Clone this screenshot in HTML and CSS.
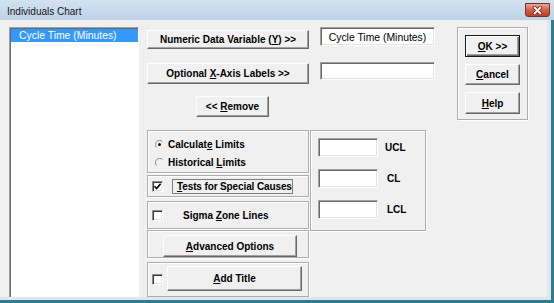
FILE: index.html
```html
<!DOCTYPE html>
<html>
<head>
<meta charset="utf-8">
<title>Individuals Chart</title>
<link rel="stylesheet" href="styles.css">
</head>
<body>
<div class="window">
  <div class="titlebar">
    <span class="title">Individuals Chart</span>
    <div class="close">
      <svg width="13" height="9" viewBox="0 0 13 9"><path d="M3.5 1.5 L9.5 7.5 M9.5 1.5 L3.5 7.5" stroke="#6a2418" stroke-width="3.4" stroke-linecap="round"/><path d="M3.5 1.5 L9.5 7.5 M9.5 1.5 L3.5 7.5" stroke="#fff" stroke-width="1.8" stroke-linecap="round"/></svg>
    </div>
  </div>
  <div class="body">
    <div class="client">
      <div class="listbox">
        <div class="item selected">Cycle Time (Minutes)</div>
      </div>

      <div class="center">
        <div class="row row1">
          <button class="btn btn-wide btn-num"><span>Numeric Data Variable (<u>Y</u>) &gt;&gt;</span></button>
          <div class="field field1">Cycle Time (Minutes)</div>
        </div>
        <div class="row row2">
          <button class="btn btn-wide btn-opt"><span>Optional <u>X</u>-Axis Labels &gt;&gt;</span></button>
          <div class="field field2"></div>
        </div>
        <div class="row row3">
          <button class="btn btn-remove"><span>&lt;&lt; <u>R</u>emove</span></button>
        </div>
        <div class="row row4">
          <div class="stack">
            <div class="frame f-radio">
              <div class="opt"><span class="radio"><svg width="9" height="9" viewBox="0 0 9 9"><path d="M7.5 1.6 A4 4 0 0 0 1.6 7.4" fill="none" stroke="#8a8a8a" stroke-width="1"/><circle cx="4.5" cy="4.5" r="1.5" fill="#111"/></svg></span><span>Calculat<u>e</u> Limits</span></div>
              <div class="opt"><span class="radio"><svg width="9" height="9" viewBox="0 0 9 9"><path d="M7.5 1.6 A4 4 0 0 0 1.6 7.4" fill="none" stroke="#8a8a8a" stroke-width="1"/></svg></span><span>Historical <u>L</u>imits</span></div>
            </div>
            <div class="frame f-tests">
              <span class="check"><svg width="9" height="9" viewBox="0 0 9 9"><path d="M1.5 4.2 L3.6 6.5 L7.6 1.8" fill="none" stroke="#000" stroke-width="1.6"/></svg></span>
              <span class="focus"><span><u>T</u>ests for Special Causes</span></span>
            </div>
            <div class="frame f-sigma">
              <span class="check"></span>
              <span class="sigma-label">Sigma <u>Z</u>one Lines</span>
            </div>
            <div class="frame f-adv">
              <button class="btn btn-adv"><span><u>A</u>dvanced Options</span></button>
            </div>
            <div class="frame f-title">
              <span class="check"></span>
              <button class="btn btn-title"><span><u>A</u>dd Title</span></button>
            </div>
          </div>
          <div class="frame f-limits">
            <div class="lim"><div class="field small"></div><span class="lab lab-ucl">UCL</span></div>
            <div class="lim"><div class="field small"></div><span class="lab lab-cl">CL</span></div>
            <div class="lim"><div class="field small"></div><span class="lab lab-lcl">LCL</span></div>
          </div>
        </div>
      </div>

      <div class="frame okgroup">
        <button class="btn btn-side btn-default"><span><u>O</u>K &gt;&gt;</span></button>
        <button class="btn btn-side btn-cancel"><span><u>C</u>ancel</span></button>
        <button class="btn btn-side btn-help"><span><u>H</u>elp</span></button>
      </div>
    </div>
  </div>
</div>
</body>
</html>
```

FILE: styles.css
```css
* { box-sizing: border-box; margin: 0; padding: 0; }
html, body { width: 554px; height: 303px; overflow: hidden; }
body {
  font-family: "Liberation Sans", Arial, sans-serif;
  color: #000;
  background: #f0f0f0;
}
u { text-decoration: underline; text-underline-offset: 1px; }

.window {
  width: 554px;
  height: 303px;
  display: flex;
  flex-direction: column;
}

.titlebar {
  height: 20px;
  flex: none;
  background: linear-gradient(#d3e2f2, #bed2e8);
  display: flex;
  align-items: flex-start;
  justify-content: space-between;
  padding: 0 4px 0 7px;
}
.title {
  font-size: 10px;
  line-height: 20px;
  margin-top: 2px;
  color: #151515;
}
.close {
  width: 25px;
  height: 14px;
  margin-top: 3px;
  border: 1px solid #7a3024;
  border-radius: 0 0 3px 3px;
  background: linear-gradient(#e9a896, #cf6049 50%, #bc3f29);
  display: flex;
  align-items: center;
  justify-content: center;
}

.body {
  flex: 1;
  display: flex;
  background: #dfe6ee;
  border-right: 3px solid #2f7d8c;
  border-bottom: 3px solid #2f7d8c;
}
.client {
  flex: 0 0 547px;
  height: 277px;
  background: #f0f0f0;
  display: flex;
  align-items: flex-start;
  padding: 7px 0 0 9px;
  overflow: hidden;
}

/* list box */
.listbox {
  flex: none;
  width: 130px;
  height: 272px;
  background: #fff;
  border: 1px solid;
  border-color: #a0a0a0 #fff #fff #a0a0a0;
  box-shadow: inset 1px 1px 0 #696969;
  padding: 1px 0 0 1px;
}
.item {
  height: 13px;
  font-size: 10.4px;
  line-height: 13px;
  padding-left: 8px;
  white-space: nowrap;
}
.item.selected { background: #3399ff; color: #fff; }

/* buttons */
.btn {
  appearance: none;
  font-family: "Liberation Sans", Arial, sans-serif;
  font-size: 10px;
  font-weight: bold;
  color: #000;
  background: #f0f0f0;
  border: 1px solid;
  border-color: #fff #696969 #696969 #fff;
  box-shadow: inset -1px -1px 0 #a0a0a0;
  display: flex;
  align-items: center;
  justify-content: center;
  white-space: nowrap;
  flex: none;
}

/* text fields */
.field {
  flex: none;
  background: #fff;
  border: 1px solid;
  border-color: #a0a0a0 #fff #fff #a0a0a0;
  box-shadow: inset 1px 1px 0 #696969, inset -1px -1px 0 #e3e3e3;
  font-size: 10.4px;
  display: flex;
  align-items: center;
  justify-content: center;
  white-space: nowrap;
}

/* center block */
.center {
  flex: none;
  width: 288px;
  margin-left: 8px;
}
.row { display: flex; align-items: flex-start; }
.row1 { height: 35px; }
.row2 { height: 34px; }
.row3 { height: 34px; }

.btn-wide { width: 162px; }
.btn-num { height: 19px; margin-top: 3px; }
.btn-opt { height: 21px; margin-top: 1px; }
.field1 { width: 115px; height: 19px; margin-left: 11px; padding-top: 1px; }
.field2 { width: 115px; height: 18px; margin-left: 11px; }
.btn-remove { width: 73px; height: 21px; margin-left: 49px; }

/* frames */
.frame {
  border: 1px solid #adadad;
  box-shadow: inset 1px 1px 0 #fff, 1px 1px 0 #fff;
}
.stack {
  width: 162px;
  flex: none;
  display: flex;
  flex-direction: column;
}
.f-radio {
  height: 43px;
  padding: 4px 0 0 7px;
}
.opt {
  height: 18px;
  display: flex;
  align-items: center;
  font-size: 10px;
  font-weight: bold;
  white-space: nowrap;
}
.radio {
  width: 9px;
  height: 9px;
  margin-right: 4px;
  display: flex;
}
.f-tests {
  height: 22px;
  margin-top: 2px;
  display: flex;
  align-items: center;
  padding-left: 4px;
}
.check {
  flex: none;
  width: 11px;
  height: 11px;
  background: #fff;
  border: 1px solid;
  border-color: #8a8a8a #fff #fff #8a8a8a;
  box-shadow: inset 1px 1px 0 #3c3c3c, inset -1px -1px 0 #e3e3e3;
  display: flex;
  align-items: center;
  justify-content: center;
}
.focus {
  margin-left: 9px;
  width: 121px;
  height: 15px;
  border: 1px solid #7c7c7c;
  padding-left: 4px;
  font-size: 10px;
  letter-spacing: -0.12px;
  font-weight: bold;
  display: flex;
  align-items: center;
  white-space: nowrap;
}
.f-sigma {
  height: 28px;
  margin-top: 4px;
  display: flex;
  align-items: center;
  padding-left: 4px;
}
.sigma-label {
  margin-left: 20px;
  font-size: 10px;
  font-weight: bold;
  white-space: nowrap;
}
.f-adv {
  height: 28px;
  margin-top: 1px;
  padding: 4px 0 0 15px;
}
.btn-adv { width: 134px; height: 22px; }
.f-title {
  height: 35px;
  margin-top: 4px;
  display: flex;
  align-items: center;
  padding-left: 4px;
}
.btn-title { width: 135px; height: 25px; margin-left: 4px; margin-top: -3px; }

/* limits frame */
.f-limits {
  flex: none;
  width: 116px;
  height: 101px;
  margin-left: 1px;
  padding: 7px 0 0 7px;
  display: flex;
  flex-direction: column;
  gap: 12px;
}
.lim {
  display: flex;
  align-items: center;
  height: 19px;
}
.field.small { width: 60px; height: 19px; }
.lab {
  font-size: 10px;
  font-weight: bold;
}
.lab-ucl { margin-left: 7px; }
.lab-cl { margin-left: 9px; }
.lab-lcl { margin-left: 9px; }

/* OK / Cancel / Help */
.okgroup {
  flex: none;
  width: 71px;
  height: 93px;
  margin-left: 22px;
  padding: 7px 0 0 7px;
  display: flex;
  flex-direction: column;
  gap: 7px;
}
.btn-side { width: 55px; height: 22px; }
.btn-cancel { height: 21px; }
.btn-default {
  border: 1px solid #1a1a1a;
  box-shadow: inset 1px 1px 0 #fff, inset -1px -1px 0 #696969, inset -2px -2px 0 #a0a0a0;
}
```
